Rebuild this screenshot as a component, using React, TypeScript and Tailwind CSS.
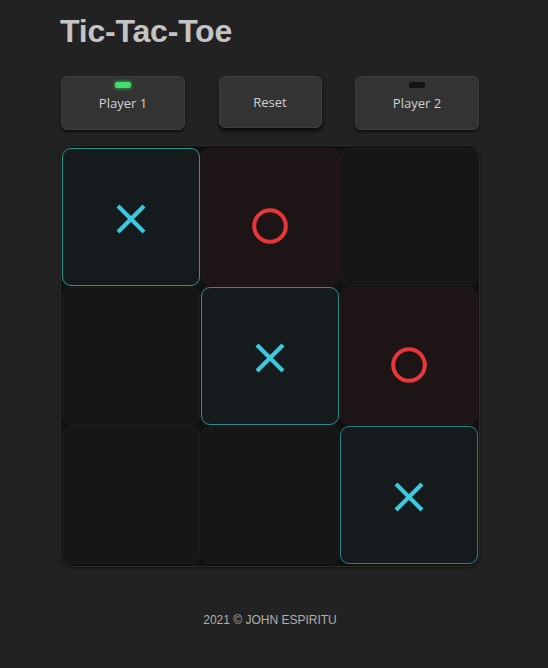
import React from "react"

type Mark = "X" | "O" | null

const BOARD: Mark[] = ["X", "O", null, null, "X", "O", null, null, "X"]

const BORDERS: Record<number, string> = {
    0: "border-[#2c9a8a]",
    4: "border-[#358a90]",
    8: "border-[#2f7f88]",
}

const XMark = () => (
    <svg width="32" height="32" viewBox="0 0 32 32" className="mt-[3px]">
        <path d="M3 3 L29 29 M29 3 L3 29" stroke="#3ec8dd" strokeWidth="4.2" strokeLinecap="butt" />
    </svg>
)

const OMark = () => (
    <svg width="36" height="36" viewBox="0 0 36 36" className="mt-[17px]">
        <circle cx="18" cy="18" r="15.8" fill="none" stroke="#e8373a" strokeWidth="4" />
    </svg>
)

const Cell = ({ mark, index }: { mark: Mark; index: number }) => {
    let cls = "bg-[#161616] border-[#1d1d1d]"
    if (mark === "X") cls = `bg-[#151b1d] ${BORDERS[index] ?? "border-[#358a90]"}`
    if (mark === "O") cls = "bg-[#1d1515] border-[#221a1a]"
    return (
        <div className={`h-[138px] rounded-[9px] border flex items-center justify-center ${cls}`}>
            {mark === "X" && <XMark />}
            {mark === "O" && <OMark />}
        </div>
    )
}

const PlayerButton = ({ label, active }: { label: string; active: boolean }) => (
    <button className="relative w-[124px] h-[54px] rounded-[6px] bg-[#333333] border border-[#3e3e3e] shadow-[0_2px_3px_rgba(0,0,0,0.6)] text-[13px] text-[#d0d0d0] pt-[2px]" style={{ fontFamily: '"Open Sans", sans-serif' }}>
        <span
            className={`absolute left-1/2 -translate-x-1/2 top-[5px] w-[16px] h-[6px] rounded-[2px] ${active ? "bg-[#3ee06a] shadow-[0_0_4px_rgba(62,224,106,0.8)]" : "bg-[#141414]"}`}
        />
        {label}
    </button>
)

export default function App() {
    return (
        <div className="min-h-[668px] bg-[#222222] pl-[60px]" style={{ fontFamily: '"Liberation Sans", Arial, sans-serif' }}>
            <div className="w-[420px] flex flex-col">
                {/* Title */}
                <h1 className="mt-[12px] text-[32px] font-bold leading-[38px] text-[#c4c4c4] tracking-[-0.2px]">Tic-Tac-Toe</h1>

                {/* Controls */}
                <div className="mt-[26px] flex items-start justify-between px-[1px]">
                    <PlayerButton label="Player 1" active />
                    <button className="w-[103px] h-[52px] rounded-[6px] bg-[#333333] border border-[#3e3e3e] shadow-[0_3px_4px_rgba(0,0,0,0.7)] text-[13px] text-[#d0d0d0] pt-[2px]" style={{ fontFamily: '"Open Sans", sans-serif' }}>
                        Reset
                    </button>
                    <PlayerButton label="Player 2" active={false} />
                </div>

                {/* Board */}
                <div className="mt-[15px] rounded-[13px] bg-[#111111] border border-[#2c2c2c] px-[1px] py-[2px] grid grid-cols-3 gap-[1px] shadow-[0_1px_3px_rgba(0,0,0,0.5)]">
                    {BOARD.map((m, i) => (
                        <Cell key={i} mark={m} index={i} />
                    ))}
                </div>

                {/* Footer */}
                <p className="mt-[44px] text-center text-[12px] text-[#b0b0b0]">2021 © JOHN ESPIRITU</p>
            </div>
        </div>
    )
}
